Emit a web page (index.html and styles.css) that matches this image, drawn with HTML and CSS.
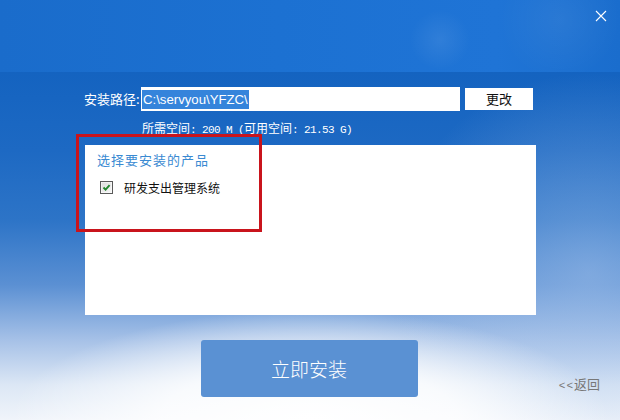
FILE: index.html
```html
<!DOCTYPE html>
<html lang="zh-CN">
<head>
<meta charset="utf-8">
<title>安装</title>
<link rel="stylesheet" href="styles.css">
</head>
<body>
<div class="window">
  <div class="topband">
    <button class="close" aria-label="关闭">
      <svg width="12" height="12" viewBox="0 0 12 12"><path d="M1 1 L11 11 M11 1 L1 11" stroke="#ffffff" stroke-width="1.1" fill="none"/></svg>
    </button>
  </div>
  <div class="content">
    <div class="pathrow">
      <span class="label">安装路径:</span>
      <div class="pathinput"><span class="sel">C:\servyou\YFZC\</span></div>
      <button class="change">更改</button>
    </div>
    <div class="info">所需空间<span class="mono">: 200 M (</span>可用空间<span class="mono">: 21.53 G)</span></div>
    <div class="panel">
      <div class="redbox"></div>
      <div class="ptitle">选择要安装的产品</div>
      <div class="item">
        <svg class="cb" width="13" height="13" viewBox="0 0 13 13">
          <defs><linearGradient id="g" x1="0" y1="0" x2="1" y2="1"><stop offset="0" stop-color="#dcdcdc"/><stop offset="1" stop-color="#f7f7f7"/></linearGradient></defs>
          <rect x="0.5" y="0.5" width="12" height="12" fill="#ffffff" stroke="#5a5a5a"/>
          <rect x="1.5" y="1.5" width="10" height="10" fill="url(#g)"/>
          <path d="M3.5 6.5 L5.6 8.6 L9.6 4.2" stroke="#21862c" stroke-width="1.9" fill="none"/>
        </svg>
        <span>研发支出管理系统</span>
      </div>
    </div>
    <div class="footer">
      <div></div>
      <button class="install">立即安装</button>
      <a class="back"><span class="lt">&lt;&lt;</span>返回</a>
    </div>
  </div>
</div>
</body>
</html>
```
FILE: styles.css
```css
* { box-sizing: border-box; }
html, body { margin: 0; padding: 0; }
body {
  font-family: "Noto Sans CJK SC", "Microsoft YaHei", sans-serif;
  width: 620px;
  height: 420px;
  overflow: hidden;
}
.window {
  width: 620px;
  height: 420px;
  position: relative;
  overflow: hidden;
  background:
    radial-gradient(ellipse 300px 110px at 50% 100%, rgba(255,255,255,1) 0%, rgba(255,255,255,0.8) 50%, rgba(255,255,255,0) 100%),
    radial-gradient(ellipse 200px 200px at 95% 65%, rgba(170,198,236,0.5) 0%, rgba(170,198,236,0) 100%),
    linear-gradient(180deg, #1463c0 72px, #1d69c3 150px, #2d74c7 220px, #5b90d3 285px, #a6c1e7 340px, #dce7f5 385px, #f0f4fa 420px);
}
.topband {
  height: 72px;
  position: relative;
  background:
    radial-gradient(circle 30px at 440px 40px, rgba(255,255,255,0.08), rgba(255,255,255,0)),
    radial-gradient(circle 60px at 560px 20px, rgba(255,255,255,0.06), rgba(255,255,255,0)),
    linear-gradient(90deg, #1a6ccb 0%, #1c71d2 45%, #1f74d6 80%, #1a6dcd 100%);
}
.close {
  position: absolute;
  top: 9px;
  right: 12px;
  width: 14px;
  height: 14px;
  padding: 1px;
  border: 0;
  background: none;
  display: flex;
}
.content {
  display: flex;
  flex-direction: column;
}
.pathrow {
  display: flex;
  align-items: center;
  margin-top: 15px;
  padding-left: 84px;
  height: 24px;
}
.label {
  width: 57px;
  color: #ffffff;
  font-size: 13px;
  line-height: 24px;
  white-space: nowrap;
}
.pathinput {
  width: 319px;
  height: 24px;
  background: #ffffff;
  display: flex;
  align-items: center;
  padding-left: 1px;
}
.sel {
  background: #3584db;
  color: #ffffff;
  font-family: "Liberation Sans", Arial, sans-serif;
  font-size: 13.2px;
  line-height: 19px;
  padding: 0 1px;
}
.change {
  margin-left: 5px;
  width: 68px;
  height: 22px;
  border: 0;
  background: #ffffff;
  color: #111111;
  font-family: "Noto Sans CJK SC", sans-serif;
  font-size: 13px;
  line-height: 22px;
  padding: 0;
}
.info {
  margin-top: 9px;
  padding-left: 142px;
  height: 16px;
  line-height: 16px;
  font-size: 12px;
  color: #ffffff;
  white-space: pre;
}
.mono {
  font-family: "Liberation Mono", monospace;
  font-size: 11px;
  letter-spacing: -0.6px;
}
.panel {
  position: relative;
  margin: 9px 0 0 85px;
  width: 451px;
  height: 170px;
  background: #ffffff;
  padding: 6px 12px;
}
.redbox {
  position: absolute;
  left: -9px;
  top: -11px;
  width: 186px;
  height: 98px;
  border: 3px solid #c9141c;
}
.ptitle {
  font-size: 13px;
  letter-spacing: 1px;
  line-height: 18px;
  color: #3a8ad2;
}
.item {
  margin-top: 8px;
  padding-left: 3px;
  display: flex;
  align-items: center;
  gap: 11px;
  height: 20px;
  font-size: 12px;
  color: #111111;
}
.cb { display: block; flex: none; }
.footer {
  margin-top: 25px;
  display: grid;
  grid-template-columns: 1fr 215px 1fr;
  align-items: end;
}
.install {
  height: 57px;
  border: 0;
  border-radius: 3px;
  background: #5a91d3;
  color: #ffffff;
  font-family: "Noto Sans CJK SC", sans-serif;
  font-weight: 300;
  font-size: 19px;
  padding: 0;
  margin-left: -2px;
}
.back {
  justify-self: end;
  margin-right: 20px;
  margin-bottom: 3px;
  font-size: 13px;
  line-height: 16px;
  color: #777777;
}
.lt {
  font-family: "Liberation Mono", monospace;
  font-size: 11px;
  letter-spacing: 1px;
  margin-right: 0;
}
```
